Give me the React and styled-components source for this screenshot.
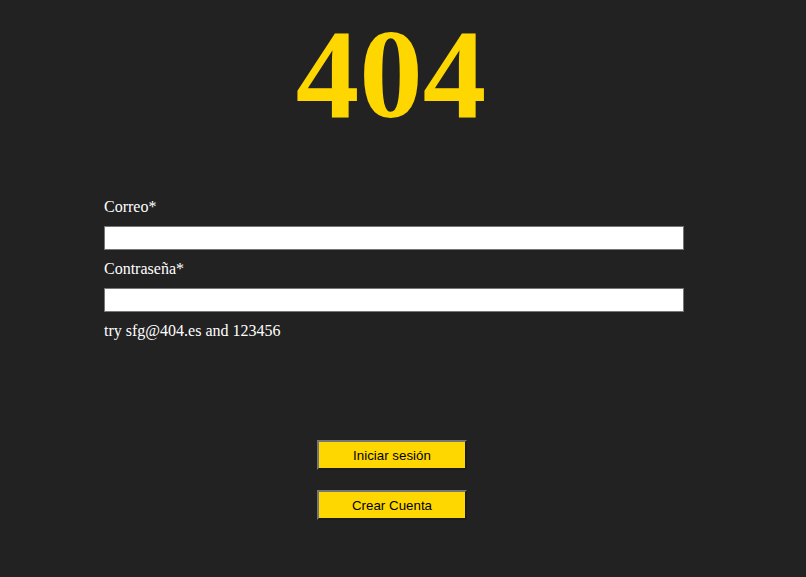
import React, { useState } from "react";
import styled, { createGlobalStyle } from "styled-components";

const GlobalStyle = createGlobalStyle`
  html, body {
    margin: 0;
    padding: 0;
    background: #222222;
  }
  body {
    font-family: "Liberation Serif", "Times New Roman", serif;
    font-size: 16px;
    color: #fff;
    min-height: 577px;
  }
`;

const Page = styled.div`
  width: 784px;
  display: flex;
  flex-direction: column;
  align-items: stretch;
`;

const Title = styled.h1`
  margin: 0 2px 0 0;
  text-align: center;
  font-family: "Liberation Serif", "Times New Roman", serif;
  font-size: 127px;
  font-weight: bold;
  line-height: 148px;
  color: #ffd700;
`;

const Form = styled.form`
  display: flex;
  flex-direction: column;
  margin-top: 50px;
  padding-left: 104px;
`;

const FormGroup = styled.div`
  display: flex;
  flex-direction: column;
  gap: 10px;
  margin-bottom: 10px;
`;

const Label = styled.label`
  display: block;
  font-size: 16px;
  line-height: 18px;
  color: #fff;
`;

const Input = styled.input`
  box-sizing: border-box;
  width: 580px;
  height: 24px;
  margin: 0;
  padding: 1px 2px;
  border: 1px solid #767676;
  background: #fff;
  font-size: 13px;
  outline: none;
`;

const Hint = styled.p`
  margin: 0;
  font-size: 16px;
  line-height: 18px;
  color: #fff;
`;

const Actions = styled.div`
  display: flex;
  flex-direction: column;
  align-items: center;
  gap: 20px;
  margin-top: 100px;
`;

const Button = styled.button`
  box-sizing: border-box;
  flex: none;
  width: 150px;
  height: 30px;
  padding: 0;
  background: #ffd700;
  color: #000;
  font-family: "Liberation Sans", Arial, sans-serif;
  font-size: 13.33px;
  border-style: solid;
  border-width: 2px;
  border-color: #767676 #1b1b1b #1b1b1b #767676;
  cursor: pointer;
`;

const App = () => {
    const [user, setUser] = useState({ email: "", password: "" });

    const onChange = (e) => {
        setUser({ ...user, [e.target.name]: e.target.value });
    };

    const onSubmit = (e) => {
        e.preventDefault();
    };

    return (
        <>
            <GlobalStyle />
            <Page>
                <Title>404</Title>
                <Form onSubmit={onSubmit}>
                    <FormGroup>
                        <Label htmlFor="email">Correo*</Label>
                        <Input id="email" name="email" type="text" value={user.email} onChange={onChange} />
                    </FormGroup>
                    <FormGroup>
                        <Label htmlFor="password">Contraseña*</Label>
                        <Input id="password" name="password" type="password" value={user.password} onChange={onChange} />
                    </FormGroup>
                    <Hint>try sfg@404.es and 123456</Hint>
                </Form>
                <Actions>
                    <Button type="button">Iniciar sesión</Button>
                    <Button type="button">Crear Cuenta</Button>
                </Actions>
            </Page>
        </>
    );
};

export default App;
